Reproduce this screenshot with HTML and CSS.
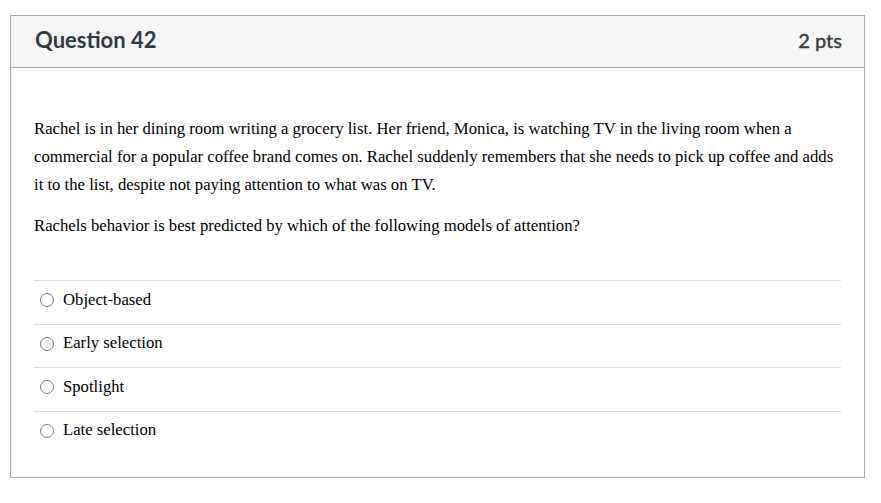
FILE: index.html
```html
<!DOCTYPE html>
<html>
<head>
<meta charset="utf-8">
<link rel="stylesheet" href="styles.css">
</head>
<body>
<div class="card">
  <div class="card-header">
    <span class="title">Question 42</span>
    <span class="pts">2 pts</span>
  </div>
  <div class="card-body">
    <p class="text">Rachel is in her dining room writing a grocery list. Her friend, Monica, is watching TV in the living room when a commercial for a popular coffee brand comes on. Rachel suddenly remembers that she needs to pick up coffee and adds it to the list, despite not paying attention to what was on TV.</p>
    <p class="text">Rachels behavior is best predicted by which of the following models of attention?</p>
    <div class="answers">
      <label class="answer"><span class="radio"></span><span class="label">Object-based</span></label>
      <label class="answer"><span class="radio"></span><span class="label">Early selection</span></label>
      <label class="answer"><span class="radio"></span><span class="label">Spotlight</span></label>
      <label class="answer"><span class="radio"></span><span class="label">Late selection</span></label>
    </div>
  </div>
</div>
</body>
</html>
```
FILE: styles.css
```css
html, body {
  margin: 0;
  padding: 0;
  background: #fff;
}
body {
  padding: 15px 16px 0 10px;
}
.card {
  border: 1px solid #a8a8a8;
  width: 853px;
  box-sizing: content-box;
}
.card-header {
  background: #f5f5f5;
  border-bottom: 1px solid #a8a8a8;
  height: 52px;
  box-sizing: border-box;
  display: flex;
  align-items: center;
  justify-content: space-between;
  padding: 0 22px 4px 24px;
  font-family: Lato, "Liberation Sans", sans-serif;
  color: #2d3b45;
}
.title {
  font-weight: 700;
  font-size: 22px;
}
.pts {
  font-weight: 500;
  font-size: 20px;
  color: #3a3f44;
  -webkit-text-stroke: 0.3px #3a3f44;
}
.card-body {
  padding: 47px 23px 23px 23px;
  font-family: "Liberation Serif", "Times New Roman", serif;
  font-size: 16.7px;
  color: #000;
}
.text {
  margin: 0 0 13px 0;
  line-height: 28px;
}
.answers {
  margin-top: 40px;
}
.answer {
  display: flex;
  align-items: center;
  border-top: 1px solid #dcdcdc;
  padding: 6.5px 0 12px 6px;
  line-height: 24px;
}
.radio {
  width: 12px;
  height: 12px;
  border: 1px solid #7a7a7a;
  border-radius: 50%;
  margin-right: 9px;
  margin-top: 1px;
  flex: none;
}
```
